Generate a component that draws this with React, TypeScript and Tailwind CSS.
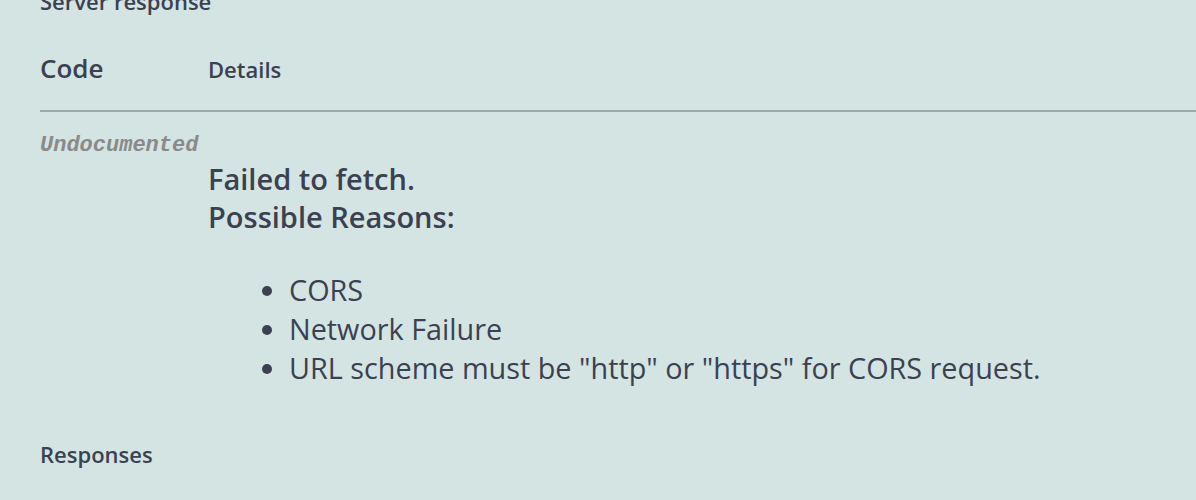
export default function App() {
  const reasons = ["CORS", "Network Failure", 'URL scheme must be "http" or "https" for CORS request.'];

  return (
    <div className="w-[1196px] h-[500px] overflow-hidden bg-[#d4e4e3] text-[#3b4151] font-['Open_Sans',sans-serif]">
      <div className="pl-[40px]">
        {/* Server response heading (cut at top) */}
        <h4 className="-mt-[12px] text-[22px] leading-[26px] font-semibold">Server response</h4>

        {/* Table head */}
        <div className="mt-[37px] flex items-end border-b-2 border-[#9ba9a9] pb-[23px]">
          <div className="w-[168px] text-[26px] leading-[34px] font-semibold pb-[2px]">Code</div>
          <div className="text-[22px] leading-[30px] font-semibold pb-[3px]">Details</div>
        </div>

        {/* Row */}
        <div className="flex">
          <div className="w-[168px] pt-[21px]">
            <span className="font-['Liberation_Mono',monospace] italic font-bold text-[22px] leading-[26px] text-[#8a8a8a]">
              Undocumented
            </span>
          </div>
          <div className="pt-[48px]">
            <div className="text-[29px] leading-[38px] font-semibold">
              Failed to fetch.
              <br />
              Possible Reasons:
            </div>
            <ul className="list-disc pl-[81px] mt-[34px] text-[28.8px] leading-[39px]">
              {reasons.map((r) => (
                <li key={r}>{r}</li>
              ))}
            </ul>
          </div>
        </div>

        <h4 className="mt-[54px] text-[22px] leading-[26px] font-semibold">Responses</h4>
      </div>
    </div>
  );
}
